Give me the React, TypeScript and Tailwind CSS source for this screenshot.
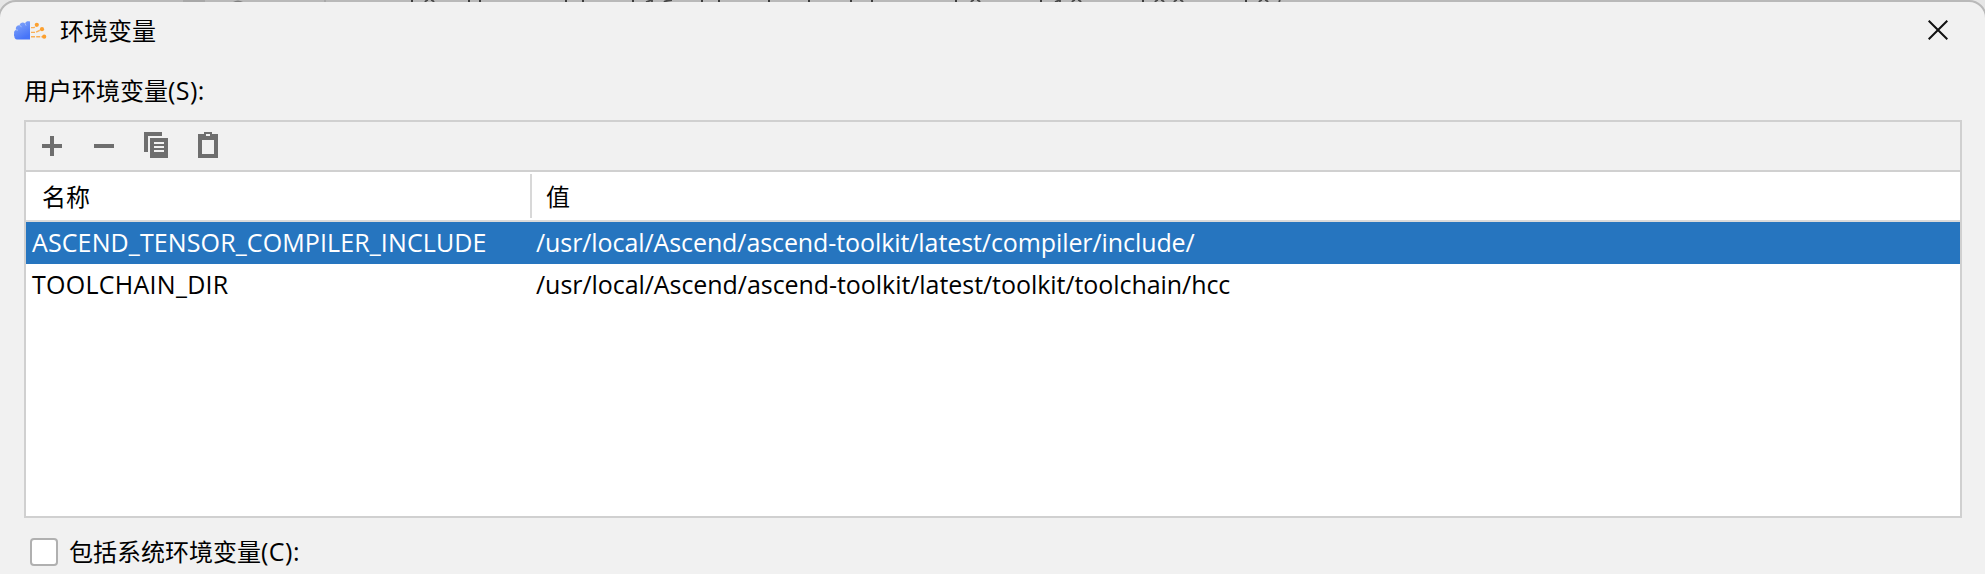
import React from 'react';

const variables = [
  { name: 'ASCEND_TENSOR_COMPILER_INCLUDE', value: '/usr/local/Ascend/ascend-toolkit/latest/compiler/include/', nameTracking: 'tracking-[0.12px]', valueTracking: 'tracking-[-0.09px]' },
  { name: 'TOOLCHAIN_DIR', value: '/usr/local/Ascend/ascend-toolkit/latest/toolkit/toolchain/hcc', nameTracking: 'tracking-[0.27px]', valueTracking: 'tracking-[-0.06px]' },
];

const stems = [411, 468, 479, 565, 582, 632, 701, 718, 768, 808, 850, 871, 955, 1040, 1142, 1245];
const curves = [425, 971, 1072, 1155, 1174, 1259];

function WindowBehind() {
  return (
    <svg className="absolute left-0 top-0" width="1985" height="2" viewBox="0 0 1985 2">
      <path d="M183 0h22v2h-22zM324 0h2v2h-2z" fill="#a8a8a8" />
      <path d="M233 2q5-3 10 0z" fill="#808080" />
      <g fill="#3c3c3c">
        {stems.map((x) => <rect key={x} x={x} y="0" width="2" height="2" />)}
      </g>
      <g fill="none" stroke="#484848" strokeWidth="1.8">
        {curves.map((x) => <path key={x} d={`M${x} 2q1-1.5 3-2M${x + 6} 0q2 .5 3 2`} />)}
        <path d="M646 2l6-2v2M664 2q2-1.5 8-2M1055 2l5-2v2M1279 2l1-2" />
      </g>
    </svg>
  );
}

function AppLogo() {
  return (
    <svg width="34" height="20" viewBox="0 0 34 20" className="block shrink-0">
      <defs>
        <linearGradient id="brain" x1="0" y1="0" x2="0.5" y2="1">
          <stop offset="0" stopColor="#8aabf9" />
          <stop offset="1" stopColor="#4674f8" />
        </linearGradient>
      </defs>
      <path d="M16 .6C14.6-.3 11.8 0 11 2.2C9 .9 6 1.5 5.6 4.4C3 4 1.2 6.4 2 8.8C.2 9.8-.2 11.4.2 12.6C-.2 13.6-.1 15 .4 15.6Q.4 18.4 3 18.4H16Z" fill="url(#brain)" />
      <path d="M11 2.2L12 4.6M5.6 4.4L7.6 5.8M2 8.8L4 9.2" stroke="#b5caff" strokeWidth=".8" />
      <g fill="none" stroke="#f9ae55" strokeWidth="1.4">
        <path d="M17 6.6H20L23 4M17 11.4H21.5L28 8.4M17 15.8H30" strokeDasharray="4 1.2" />
      </g>
      <g fill="#fca02f"><circle cx="22.8" cy="3.8" r="2.1" /><circle cx="28" cy="8.2" r="2.1" /><circle cx="30.2" cy="15.7" r="2.1" /></g>
    </svg>
  );
}

export default function App() {
  return (
    <div className="relative h-[574px] w-[1985px] overflow-hidden bg-[#e6e6e6] font-['Open_Sans','Noto_Sans_CJK_SC',sans-serif] text-[24px] leading-[36px] text-black">
      <div className="-mx-[2px] flex h-[590px] flex-col rounded-t-[18px] border-2 border-[#b9b9b9] bg-[#f1f1f1]">
        <div className="flex h-[58px] shrink-0 items-center pl-[14px] pr-[37px]">
          <AppLogo />
          <span className="ml-3">环境变量</span>
          <svg className="mb-[2px] ml-auto" width="20" height="20" viewBox="0 0 20 20" stroke="#111" strokeWidth="2"><path d="M.7.7l18.6 18.6M19.3.7L.7 19.3" /></svg>
        </div>
        <div className="flex h-[60px] shrink-0 items-center pl-6"><span>用户环境变量<span className="text-[25px] tracking-[0.4px]">(S):</span></span></div>
        <div className="ml-6 mr-[23px] flex h-[398px] shrink-0 flex-col border-2 border-[#d0d0d0] bg-white">
          <div className="h-[50px] shrink-0 border-b-2 border-[#d0d0d0] bg-[#f1f1f1]">
            <svg className="block" width="210" height="48" viewBox="26 122 210 48" fill="#6e6e6e" shapeRendering="crispEdges">
              <path d="M50 136h4v8h8v4h-8v8h-4v-8h-8v-4h8zM94 144h20v4H94zM144 132h18v4h-14v16h-4zM150 138h18v20h-18z" />
              <path fill="#f1f1f1" d="M154 142h10v2h-10zM154 146h10v2h-10zM154 150h10v2h-10z" />
              <path fillRule="evenodd" d="M198 134h6v-2h8v2h6v24h-20zM202 140v14h12v-14zM206 134v2h4v-2z" />
            </svg>
          </div>
          <div className="flex h-[50px] shrink-0 border-b-2 border-[#dadada]">
            <div className="my-[2px] flex w-[506px] items-center border-r-2 border-[#d8d8d8] pl-4 pt-[2px]">名称</div>
            <div className="flex items-center pl-[14px] pt-[2px]">值</div>
          </div>
          {variables.map((v, i) => (
            <div key={v.name} className={i === 0 ? 'flex h-[42px] items-center bg-[#2675bf] pb-[2px] text-[25px] text-white' : 'flex h-[42px] items-center pb-[2px] text-[25px]'}>
              <div className={`w-[510px] whitespace-nowrap pl-[6px] ${v.nameTracking}`}>{v.name}</div>
              <div className={`whitespace-nowrap ${v.valueTracking}`}>{v.value}</div>
            </div>
          ))}
        </div>
        <div className="flex pl-[30px] pt-[16px]">
          <span className="mt-[4px] size-[28px] rounded-[4px] border-2 border-[#b0b0b0] bg-white" />
          <span className="-mt-px ml-[11px]">包括系统环境变量<span className="text-[25px] tracking-[0.5px]">(C):</span></span>
        </div>
      </div>
      <WindowBehind />
    </div>
  );
}
